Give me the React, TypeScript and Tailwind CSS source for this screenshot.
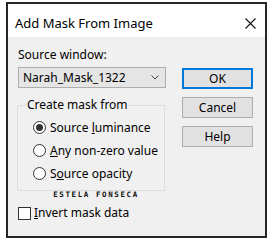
import React from 'react';

const font = { fontFamily: '"Segoe UI", "Noto Sans", "Open Sans", sans-serif' };

function Radio({ checked, children }: { checked?: boolean; children: React.ReactNode }) {
  return (
    <div className="flex items-center gap-[4px] h-[13px]">
      <span className="w-[13px] h-[13px] rounded-full border border-[#333] bg-white flex items-center justify-center">
        {checked && <span className="w-[7px] h-[7px] rounded-full bg-[#333]" />}
      </span>
      <span className="leading-none">{children}</span>
    </div>
  );
}

export default function App() {
  return (
    <div className="w-[272px] h-[241px] bg-white pl-[6px] pt-[2px] text-[12px] text-black" style={font}>
      <div className="w-[261px] h-[236px] border-2 border-[#262626] flex flex-col">
        <div className="h-[33px] bg-white flex items-center justify-between pl-[7px] pr-[9px] pt-[6px]">
          <span className="text-[13px]">Add Mask From Image</span>
          <svg width="11" height="11" viewBox="0 0 11 11">
            <path d="M0.5 0.5L10.5 10.5M10.5 0.5L0.5 10.5" stroke="#111" strokeWidth="1.1" />
          </svg>
        </div>
        <div className="flex-1 bg-[#f0f0f0] flex pl-[10px] pr-[12px]">
          <div className="w-[148px] flex flex-col">
            <div className="mt-[10px] h-[16px] leading-[16px]">
              Source window:
            </div>
            <div className="mt-[4px] h-[21px] bg-[#e5e5e5] border border-[#adadad] flex items-center justify-between pl-[4px] pr-[6px]">
              <span>Narah_Mask_1322</span>
              <svg width="8" height="5" viewBox="0 0 8 5">
                <path d="M0.5 0.5L4 4L7.5 0.5" stroke="#444" fill="none" strokeWidth="1" />
              </svg>
            </div>
            <div className="mt-[17px] relative h-[86px] border border-[#dcdcdc] rounded-[1px] mr-[1px] ml-[-1px]">
              <span className="absolute left-[8px] top-[-9px] bg-[#f0f0f0] px-[1px] leading-[16px]">Create mask from</span>
              <div className="flex flex-col gap-[10px] pl-[15px] pt-[15px]">
                <Radio checked>Source <span className="underline">l</span>uminance</Radio>
                <Radio><span className="underline">A</span>ny non-zero value</Radio>
                <Radio>S<span className="underline">o</span>urce opacity</Radio>
              </div>
            </div>
            <div
              className="mt-[0px] self-center text-[7.5px] font-bold tracking-[1.6px] leading-none ml-[8px] text-[#111]"
              style={{ fontFamily: '"DejaVu Sans Mono", monospace' }}
            >
              ESTELA FONSECA
            </div>
            <div className="mt-[8px] flex items-center gap-[3px]">
              <span className="w-[13px] h-[13px] border border-[#333] bg-white" />
              <span className="leading-none"><span className="underline">I</span>nvert mask data</span>
            </div>
          </div>
          <div className="ml-auto w-[71px] flex flex-col gap-[8px] pt-[31px]">
            <div className="h-[21px] bg-[#e1e1e1] border-2 border-[#0078d7] flex items-center justify-center">OK</div>
            <div className="h-[21px] bg-[#e1e1e1] border border-[#adadad] flex items-center justify-center">Cancel</div>
            <div className="h-[21px] bg-[#e1e1e1] border border-[#adadad] flex items-center justify-center">Help</div>
          </div>
        </div>
      </div>
    </div>
  );
}
